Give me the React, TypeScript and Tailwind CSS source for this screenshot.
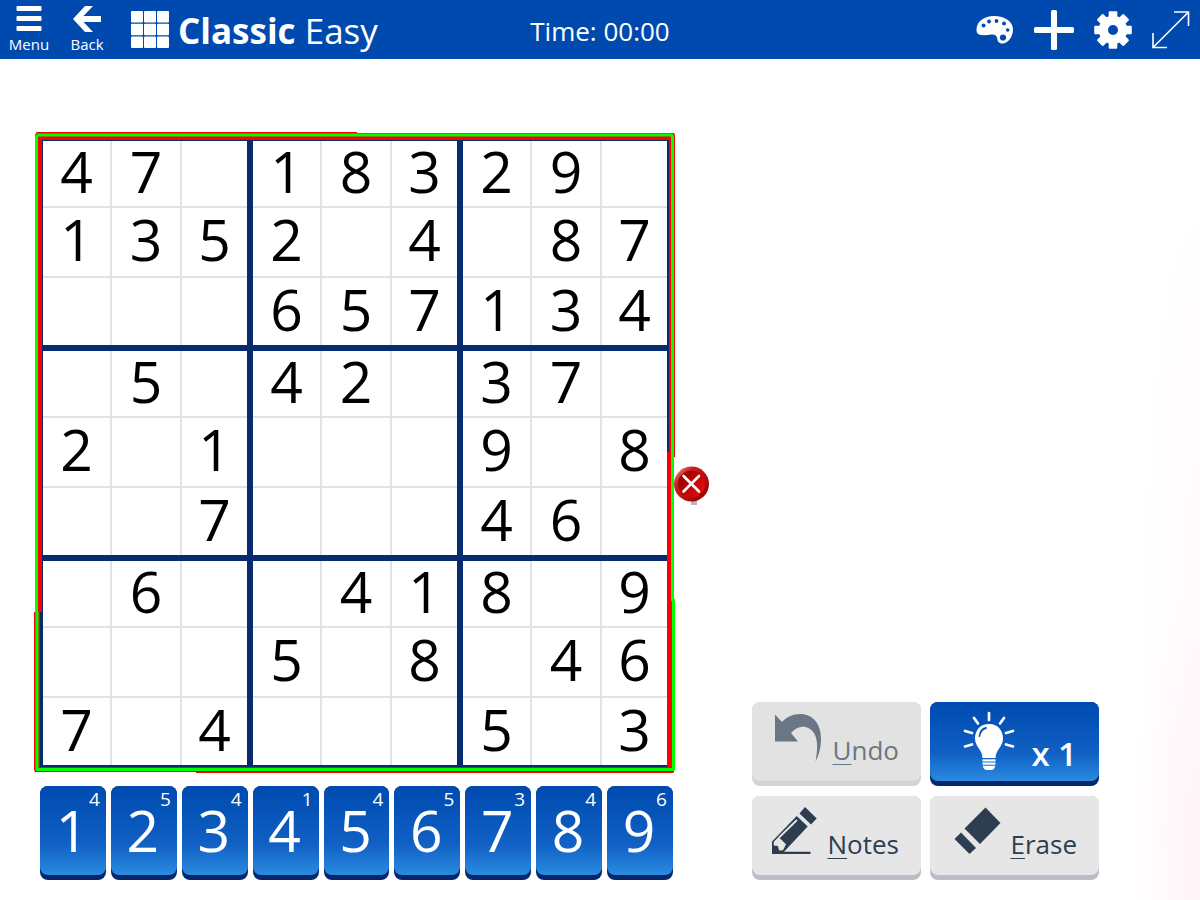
import React from "react";

const puzzle: string[] = [
  "47.18329.",
  "1352.4.87",
  "...657134",
  ".5.42.37.",
  "2.1...9.8",
  "..7...46.",
  ".6..418.9",
  "...5.8.46",
  "7.4...5.3",
];

const remaining = [4, 5, 4, 1, 4, 5, 3, 4, 6];

function MenuIcon() {
  return (
    <svg width="26" height="26" viewBox="0 0 26 26" fill="white" aria-hidden="true">
      <rect x="0.5" y="0" width="25" height="5" rx="1" />
      <rect x="0.5" y="10" width="25" height="5" rx="1" />
      <rect x="0.5" y="20" width="25" height="5" rx="1" />
    </svg>
  );
}

function BackIcon() {
  return (
    <svg width="28" height="26" viewBox="0 0 28 26" fill="white" aria-hidden="true">
      <path d="M12 0H20L10.500 10H28V16H10.500L20 26H12L0 13Z" />
    </svg>
  );
}

function GridIcon() {
  return (
    <svg width="38" height="37" viewBox="0 0 38 37" fill="white" aria-hidden="true">
      {[0, 1, 2].map((r) =>
        [0, 1, 2].map((c) => (
          <rect key={`${r}${c}`} x={c * 13} y={r * 12.7} width="12" height="11.600" rx="1" />
        )),
      )}
    </svg>
  );
}

function PaletteIcon() {
  return (
    <svg width="38" height="28" viewBox="0 0 38 28" aria-hidden="true">
      <path
        fill="white"
        d="M18 0C29 0 37 5.500 37 13.500C37 21 32 27.500 26.500 27.500C22.500 27.500 21.500 25 21.200 22.500C20.800 19.500 19 18.300 15.500 18.500C12 18.700 8.500 19.500 5 19C1.500 18.500 0.300 16.500 0.500 13C1 5.500 8 0 18 0Z"
      />
      <g fill="#004aaf">
        <circle cx="7.500" cy="9.500" r="2" />
        <circle cx="13" cy="5.500" r="1.900" />
        <circle cx="20.500" cy="5" r="1.900" />
        <circle cx="28" cy="7.500" r="1.900" />
        <circle cx="31.700" cy="14" r="1.800" />
        <circle cx="27" cy="21.500" r="3.100" />
      </g>
    </svg>
  );
}

function PlusIcon() {
  return (
    <svg width="40" height="40" viewBox="0 0 40 40" fill="white" aria-hidden="true">
      <rect x="17" y="0" width="6" height="40" rx="1.500" />
      <rect x="0" y="17" width="40" height="6" rx="1.500" />
    </svg>
  );
}

function GearIcon() {
  return (
    <svg width="38" height="38" viewBox="-19 -19 38 38" fill="white" aria-hidden="true">
      {[0, 45, 90, 135].map((a) => (
        <rect key={a} x="-4.300" y="-18.800" width="8.600" height="37.600" rx="1" transform={`rotate(${a})`} />
      ))}
      <circle r="14.200" />
      <circle r="5" fill="#004aaf" />
    </svg>
  );
}

function ExpandIcon() {
  return (
    <svg width="38" height="38" viewBox="0 0 38 38" fill="none" stroke="white" strokeWidth="1.600" aria-hidden="true">
      <path d="M22 1H36.500V15M36.500 1L1 36.500M1 22V36.500H15" />
    </svg>
  );
}

function UndoIcon() {
  return (
    <svg className="absolute left-[23px] top-[12px]" width="46" height="48" viewBox="0 0 46 48" fill="#6b7684" aria-hidden="true">
      <path d="M0 0.500L7 8C11.500 3 17.500 0 25 0C38 0 46 10 46 25C46 34 43.500 42 40.500 47.500C42.500 37 43 28 40 21C37 14.500 31 12 25.500 13C21 14 18 16.500 16 19L23 27.500H0Z" />
    </svg>
  );
}

function PencilIcon() {
  return (
    <svg className="absolute left-[20px] top-[11px]" width="46" height="48" viewBox="0 0 46 48" aria-hidden="true">
      <g fill="#2c3e50">
        <path d="M33 0L44.700 11.500L39 17.500L27.500 6.500Z" />
        <path d="M24.700 9L35.700 19.500L12 44.800H38.500V47H0V34.500Z" />
      </g>
      <path d="M1.800 34.800L6.500 30L14 37.200L11 43.200L7 43.500L6 39L1.800 38.500Z" fill="#e6e6e6" />
      <path d="M7 30.500L25 13" stroke="#e6e6e6" strokeWidth="1.800" />
    </svg>
  );
}

function EraserIcon() {
  return (
    <svg className="absolute left-[24px] top-[11px]" width="48" height="48" viewBox="0 0 48 48" fill="#2c3e50" aria-hidden="true">
      <path d="M31.500 0.500L46.500 16L26 37L10.500 21.500Z" />
      <path d="M7 25.500L22 41L15.500 47L0.500 32Z" />
    </svg>
  );
}

function BulbIcon() {
  return (
    <svg className="absolute left-[33px] top-[9px]" width="52" height="60" viewBox="0 0 52 60" aria-hidden="true">
      <g fill="white">
        <path d="M26 13C17.500 13 12 19 12 27.500C12 31 13.500 34 15.500 37C18 40.500 19.300 43 19.500 47H32.500C32.700 43 34 40.500 36.500 37C38.500 34 40 31 40 27.500C40 19 34.500 13 26 13Z" />
        <rect x="19.500" y="48.300" width="13" height="2.200" />
        <rect x="19.500" y="51.500" width="13" height="2.200" />
        <path d="M19.800 54.700H32.200C32 57.500 30 59 28 59H24C22 59 20 57.500 19.800 54.700Z" />
      </g>
      <g fill="none" stroke="white" strokeWidth="2.700" strokeLinecap="round">
        <path d="M26 2V9M11 7L15 12.500M41 7L37 12.500M2 20L9 22M50 20L43 22M2 35.500L9 33.500M50 35.500L43 33.500" />
        <path d="M16.500 25C17 20.500 19.500 17.800 23 17" stroke="#0853ba" strokeWidth="1.800" />
      </g>
    </svg>
  );
}

function BoardOutline() {
  return (
    <svg
      className="pointer-events-none absolute -inset-[6px] h-[calc(100%+12px)] w-[calc(100%+12px)]"
      viewBox="0 0 642 642"
      preserveAspectRatio="none"
      aria-hidden="true"
    >
      <g fill="#ff0000">
        <path d="M3 0H323V1H640L641 3V8H2V1Z" />
        <path d="M323 5H640V7H323Z" />
        <path d="M2 1H8V480H6V640H1L0 638V480H1V162H1V3Z" />
        <path d="M634 3H641V325H640V468H639V640H633V320H635V3Z" />
        <path d="M1 635H640V640L639 641H480V641H162V640H1Z" />
      </g>
      <path
        d="M3 637.500V480H2.500V4.500L4 3H637.500L638.500 4V468H639.500V637.500Z"
        fill="none"
        stroke="#00ff00"
        strokeWidth="3"
        strokeLinejoin="round"
      />
    </svg>
  );
}

function ErrorBadge() {
  return (
    <svg
      className="absolute -right-[39px] top-[52%] z-10"
      width="36"
      height="40"
      viewBox="0 0 36 40"
      role="img"
      aria-label="Error"
    >
      <defs>
        <linearGradient id="rim" x1="0" y1="0" x2="1" y2="1">
          <stop offset="0" stopColor="#ef9a9a" />
          <stop offset="0.3" stopColor="#cf1b1b" />
          <stop offset="1" stopColor="#8a0000" />
        </linearGradient>
        <linearGradient id="core" x1="0" y1="0" x2="1" y2="0.6">
          <stop offset="0" stopColor="#850000" />
          <stop offset="1" stopColor="#e30b0b" />
        </linearGradient>
      </defs>
      <rect x="18" y="34" width="6" height="5" fill="#b8b8b8" />
      <circle cx="18.500" cy="18" r="17.500" fill="url(#rim)" />
      <circle cx="18.500" cy="18" r="13.500" fill="url(#core)" />
      <path d="M10.500 10L26 25.500M26 10L10.500 25.500" stroke="white" strokeWidth="2.600" strokeLinecap="round" />
    </svg>
  );
}

function Board() {
  return (
    <div className="relative mr-[3px] aspect-square">
      <div className="grid h-full grid-cols-3 grid-rows-3 gap-[6px] bg-[#062b6f] p-[3px]">
        {Array.from({ length: 9 }, (_, box) => (
          <div key={box} className="grid grid-cols-[67fr_68fr_65fr] grid-rows-[65fr_68fr_67fr] gap-[2px] bg-[#e2e2e2]">
            {Array.from({ length: 9 }, (_, i) => {
              const row = Math.floor(box / 3) * 3 + Math.floor(i / 3);
              const col = (box % 3) * 3 + (i % 3);
              const value = puzzle[row][col];
              return (
                <div
                  key={i}
                  className="flex min-h-0 min-w-0 items-center justify-center bg-white pb-[5px] text-[57px] leading-none text-black"
                >
                  {value === "." ? "" : value}
                </div>
              );
            })}
          </div>
        ))}
      </div>
      <BoardOutline />
      <ErrorBadge />
    </div>
  );
}

const blueFace = "bg-linear-to-b from-[#004aaf] via-[#1160c4] via-65% to-[#2b8be0]";

function NumberKey({ digit, left }: { digit: number; left: number }) {
  return (
    <button className="flex h-[94px] rounded-[8px] bg-[#06276c] pb-[5px] text-white">
      <span className={`relative flex flex-1 items-center justify-center rounded-[8px] ${blueFace}`}>
        <span className="absolute right-[6px] top-[2px] text-[19px] leading-[22px]">{left}</span>
        <span className="pr-[2px] text-[57px] leading-none">{digit}</span>
      </span>
    </button>
  );
}

function ActionButton({
  icon,
  label,
  disabled = false,
}: {
  icon: React.ReactNode;
  label: string;
  disabled?: boolean;
}) {
  return (
    <button
      disabled={disabled}
      className={`flex h-[84px] rounded-[8px] pb-[5px] ${disabled ? "bg-[#d4d4d7] text-[#6b7684]" : "bg-[#bcbcc6] text-[#2c3e50]"}`}
    >
      <span
        className={`relative flex flex-1 items-end justify-end rounded-[8px] pb-[13px] pr-[22px] ${disabled ? "bg-[#e2e2e2]" : "bg-[#e6e6e6]"}`}
      >
        {icon}
        <span className="text-[26px] leading-[36px]">
          <span className="underline decoration-1 underline-offset-[4px]">{label[0]}</span>
          {label.slice(1)}
        </span>
      </span>
    </button>
  );
}

export default function App() {
  return (
    <div className="flex min-h-screen flex-col bg-white font-['Open_Sans','Noto_Sans',sans-serif]">
      <header className="grid h-[59px] grid-cols-[1fr_auto_1fr] items-center bg-[#004aaf] text-white">
        <div className="flex h-full items-center">
          <button className="flex h-full w-[58px] flex-col items-center gap-[3px] pt-[6px] text-[15px] leading-[18px]">
            <MenuIcon />
            Menu
          </button>
          <button className="flex h-full w-[58px] flex-col items-center gap-[3px] pt-[6px] text-[15px] leading-[18px]">
            <BackIcon />
            Back
          </button>
          <div className="flex items-center gap-[9px] pl-[15px]">
            <GridIcon />
            <h1 className="whitespace-nowrap pt-[3px] text-[35px] leading-[44px]">
              <strong>Classic</strong> Easy
            </h1>
          </div>
        </div>
        <p className="pt-[2px] text-[26px] leading-[36px]">Time: 00:00</p>
        <div className="flex items-center justify-end gap-[20px] pr-[10px]">
          <button aria-label="Theme"><PaletteIcon /></button>
          <button aria-label="New game"><PlusIcon /></button>
          <button aria-label="Settings"><GearIcon /></button>
          <button aria-label="Full screen"><ExpandIcon /></button>
        </div>
      </header>

      <main className="flex flex-1 items-end bg-[radial-gradient(70px_280px_at_100%_95%,#fff3f8,transparent),radial-gradient(60px_420px_at_100%_65%,#fffafd,transparent)] pb-[20px] pl-[40px] pr-[101px] pt-[79px]">
        <div className="flex min-w-0 flex-[633] flex-col gap-[18px]">
          <Board />
          <div className="grid grid-cols-9 gap-[5px]">
            {remaining.map((left, i) => (
              <NumberKey key={i} digit={i + 1} left={left} />
            ))}
          </div>
        </div>
        <div className="ml-[79px] grid min-w-0 flex-[347] grid-cols-2 gap-x-[9px] gap-y-[10px]">
          <ActionButton icon={<UndoIcon />} label="Undo" disabled />
          <button className="flex h-[84px] rounded-[8px] bg-[#06276c] pb-[5px] text-white" aria-label="Hint x 1">
            <span className={`relative flex flex-1 items-end justify-end rounded-[8px] pb-[8px] pr-[22px] ${blueFace}`}>
              <BulbIcon />
              <span className="text-[33px] font-semibold leading-[38px]">x 1</span>
            </span>
          </button>
          <ActionButton icon={<PencilIcon />} label="Notes" />
          <ActionButton icon={<EraserIcon />} label="Erase" />
        </div>
      </main>
    </div>
  );
}
